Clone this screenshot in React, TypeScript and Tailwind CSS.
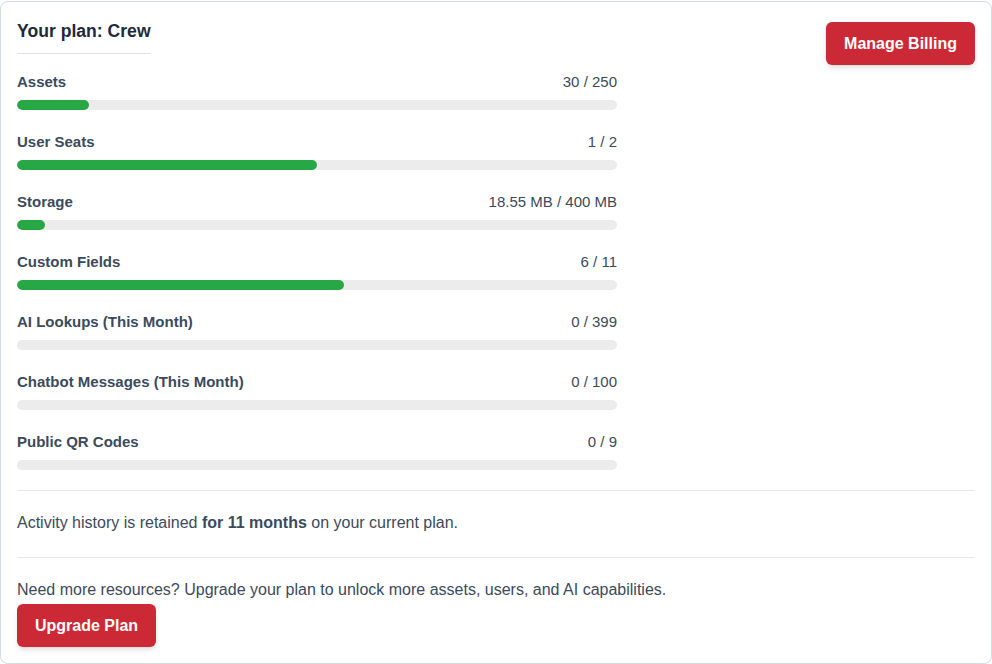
const usage = [
  { label: "Assets", value: "30 / 250", used: 30, limit: 250 },
  { label: "User Seats", value: "1 / 2", used: 1, limit: 2 },
  { label: "Storage", value: "18.55 MB / 400 MB", used: 18.55, limit: 400 },
  { label: "Custom Fields", value: "6 / 11", used: 6, limit: 11 },
  { label: "AI Lookups (This Month)", value: "0 / 399", used: 0, limit: 399 },
  { label: "Chatbot Messages (This Month)", value: "0 / 100", used: 0, limit: 100 },
  { label: "Public QR Codes", value: "0 / 9", used: 0, limit: 9 },
];

function UsageRow({ label, value, used, limit }: (typeof usage)[number]) {
  const pct = Math.min(100, (used / limit) * 100);
  return (
    <div className="w-[600px] mb-5">
      <div className="flex items-center justify-between h-6 mb-1.5 text-[15px] text-[#3b4a5d]">
        <span className="font-semibold">{label}</span>
        <span>{value}</span>
      </div>
      <div className="h-2.5 rounded-full bg-[#ececec] overflow-hidden">
        {pct > 0 && <div className="h-full rounded-full bg-[#28a745]" style={{ width: `${pct}%` }} />}
      </div>
    </div>
  );
}

export default function App() {
  return (
    <div className="pt-px font-['Liberation_Sans',Arial,sans-serif]">
      <div className="h-[663px] border border-[#d6dae1] rounded-lg bg-white px-4 pt-4">
        <div className="flex justify-between items-start">
          <h2 className="text-[17.6px] leading-[27px] font-semibold text-[#1e293b] pb-2 border-b border-[#dfe3e8]">
            Your plan: Crew
          </h2>
          <button className="mt-1 -mb-[11px] h-[43px] px-[18px] rounded-md bg-[#cc2936] text-white font-bold text-base shadow-md">
            Manage Billing
          </button>
        </div>

        <div className="mt-4">
          {usage.map((u) => (
            <UsageRow key={u.label} {...u} />
          ))}
        </div>

        <div className="border-t border-[#e5e7eb] pt-5 pb-[22px] text-base leading-6 text-[#3b4a5d]">
          Activity history is retained <strong className="font-bold">for 11 months</strong> on your current plan.
        </div>

        <div className="border-t border-[#e5e7eb] pt-5 text-base leading-6 text-[#3b4a5d]">
          <p>Need more resources? Upgrade your plan to unlock more assets, users, and AI capabilities.</p>
          <button className="mt-0.5 h-[43px] px-[18px] rounded-md bg-[#cc2936] text-white font-bold text-base shadow-md">
            Upgrade Plan
          </button>
        </div>
      </div>
    </div>
  );
}
